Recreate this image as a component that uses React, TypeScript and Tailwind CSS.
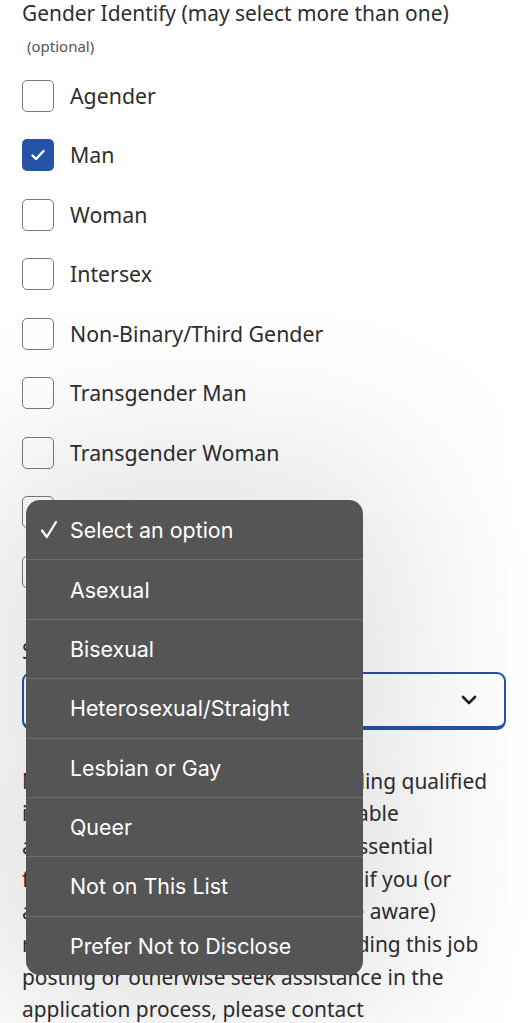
import React from 'react';

const genders = [
  { label: 'Agender', checked: false },
  { label: 'Man', checked: true },
  { label: 'Woman', checked: false },
  { label: 'Intersex', checked: false },
  { label: 'Non-Binary/Third Gender', checked: false },
  { label: 'Transgender Man', checked: false },
  { label: 'Transgender Woman', checked: false },
  { label: 'Two-Spirit', checked: false },
  { label: 'Prefer Not to Disclose', checked: false },
];

const options = [
  'Select an option',
  'Asexual',
  'Bisexual',
  'Heterosexual/Straight',
  'Lesbian or Gay',
  'Queer',
  'Not on This List',
  'Prefer Not to Disclose',
];

const paragraph = [
  'NuroAI, Inc. is committed to providing qualified',
  'individuals with disabilities reasonable',
  'accommodations to perform the essential',
  'functions of their job. Additionally, if you (or',
  'any applicant of whom you may be aware)',
  'require any accommodation regarding this job',
  'posting or otherwise seek assistance in the',
  'application process, please contact',
];

const Checkbox: React.FC<{ checked: boolean }> = ({ checked }) =>
  checked ? (
    <div className="w-[32px] h-[32px] rounded-[5px] bg-[#2553a8] flex items-center justify-center shrink-0">
      <svg width="16" height="16" viewBox="0 0 16 16" fill="none">
        <path d="M2.5 8.5l3.5 3.5 7.5-8" stroke="white" strokeWidth="2.4" strokeLinecap="round" strokeLinejoin="round" />
      </svg>
    </div>
  ) : (
    <div className="w-[32px] h-[32px] rounded-[5px] border-[1.5px] border-[#7a7a7a] bg-white shrink-0" />
  );

const App: React.FC = () => {
  return (
    <div className="relative w-[528px] h-[1023px] overflow-hidden bg-white text-[#2e2e2e] font-['Noto_Sans',sans-serif]">
      <div className="px-[22px]">
        <h2 className="text-[20.9px] leading-[28px] mt-[-1px]">Gender Identify (may select more than one)</h2>
        <p className="text-[15px] leading-[20px] text-[#555] ml-[5px] mt-[9px]">(optional)</p>

        <div className="mt-[10px] flex flex-col">
          {genders.map(g => (
            <label key={g.label} className="flex items-center gap-[16px] h-[59.5px]">
              <Checkbox checked={g.checked} />
              <span className="text-[21.3px]">{g.label}</span>
            </label>
          ))}
        </div>

        <div className="mt-[37px] text-[21px] leading-[24px]">Sexual Orientation</div>
        <div className="mt-[9px] h-[58px] rounded-[9px] border-2 border-b-[4px] border-[#2553a8] flex items-center justify-end pr-[26px]">
          <svg width="18" height="12" viewBox="0 0 18 12" fill="none">
            <path d="M3 3l6 6 6-6" stroke="#222" strokeWidth="2.6" strokeLinecap="round" strokeLinejoin="round" />
          </svg>
        </div>

        <p className="mt-[35px] text-[20.9px] leading-[32.7px]">
          {paragraph.map((line, i) => (
            <React.Fragment key={i}>
              {line}
              {i < paragraph.length - 1 && <br />}
            </React.Fragment>
          ))}
        </p>
      </div>

      {/* native select popup */}
      <div className="absolute left-[26px] top-[500px] w-[337px] rounded-[14px] bg-[#555556] overflow-hidden shadow-[0_0_170px_40px_rgba(0,0,0,0.13)] font-['Inter',sans-serif]">
        {options.map((o, i) => (
          <div
            key={o}
            className={`relative h-[59.4px] flex items-center pl-[44px] text-[21.4px] text-white ${i > 0 ? 'border-t border-[#6b6b6c]' : ''}`}
          >
            {i === 0 && (
              <svg className="absolute left-[14px] top-[20px]" width="18" height="19" viewBox="0 0 18 19" fill="none">
                <path d="M2 10.5l4.8 6.5L16 2" stroke="white" strokeWidth="2.2" strokeLinecap="round" strokeLinejoin="round" />
              </svg>
            )}
            {o}
          </div>
        ))}
      </div>
    </div>
  );
};

export default App;
